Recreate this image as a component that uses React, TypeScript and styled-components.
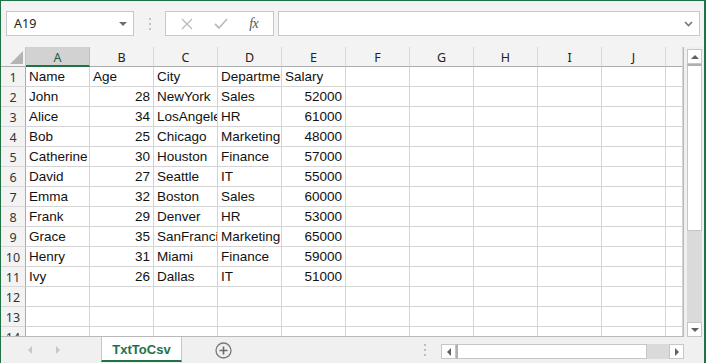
import React from 'react';
import styled, { createGlobalStyle } from 'styled-components';

const GlobalStyle = createGlobalStyle`
  html, body {
    margin: 0;
    padding: 0;
    background: #ffffff;
  }
  * {
    box-sizing: border-box;
  }
`;

const columns = ['A', 'B', 'C', 'D', 'E', 'F', 'G', 'H', 'I', 'J', ''];

type Row = [string, string | number, string, string, string | number];

const rows: Row[] = [
  ['Name', 'Age', 'City', 'Department', 'Salary'],
  ['John', 28, 'NewYork', 'Sales', 52000],
  ['Alice', 34, 'LosAngeles', 'HR', 61000],
  ['Bob', 25, 'Chicago', 'Marketing', 48000],
  ['Catherine', 30, 'Houston', 'Finance', 57000],
  ['David', 27, 'Seattle', 'IT', 55000],
  ['Emma', 32, 'Boston', 'Sales', 60000],
  ['Frank', 29, 'Denver', 'HR', 53000],
  ['Grace', 35, 'SanFrancisco', 'Marketing', 65000],
  ['Henry', 31, 'Miami', 'Finance', 59000],
  ['Ivy', 26, 'Dallas', 'IT', 51000],
];

const TOTAL_ROWS = 14;

const Frame = styled.div`
  width: 706px;
  height: 363px;
  border-style: solid;
  border-color: #217346;
  border-width: 1px 2px 0 1px;
  background: #f3f3f3;
  display: flex;
  flex-direction: column;
  overflow: hidden;
  font-family: 'Liberation Sans', Arial, sans-serif;
`;

const Toolbar = styled.div`
  height: 46px;
  flex: none;
  display: flex;
  align-items: flex-start;
  padding: 10px 4px 0 5px;
`;

const NameBox = styled.div`
  width: 128px;
  height: 25px;
  background: #ffffff;
  border: 1px solid #c8c8c8;
  display: flex;
  align-items: center;
  justify-content: space-between;
  padding: 0 6px 0 7px;
  font-family: 'Noto Sans', 'Open Sans', sans-serif;
  font-size: 12.5px;
  color: #222;
`;

const Separator = styled.div`
  width: 31px;
  height: 25px;
  display: flex;
  align-items: center;
  justify-content: center;
`;

const FxButtons = styled.div`
  width: 109px;
  height: 25px;
  background: #ffffff;
  border: 1px solid #c8c8c8;
  display: flex;
  align-items: center;
  justify-content: space-around;
  padding: 0 4px;
`;

const FxLabel = styled.span`
  font-family: 'Liberation Serif', 'Times New Roman', serif;
  font-style: italic;
  font-size: 14px;
  color: #555;
  letter-spacing: -0.5px;
`;

const FormulaInput = styled.div`
  flex: 1;
  margin-left: 4px;
  height: 25px;
  background: #ffffff;
  border: 1px solid #c8c8c8;
  display: flex;
  align-items: center;
  justify-content: flex-end;
  padding-right: 6px;
`;

const SheetArea = styled.div`
  flex: 1;
  display: flex;
  min-height: 0;
`;

const GridWrap = styled.div`
  width: 683px;
  overflow: hidden;
  background: #ffffff;
  border-right: 1px solid #b9b9b9;
  border-bottom: 1px solid #b9b9b9;
`;

const Grid = styled.div`
  display: grid;
  grid-template-columns: 25px repeat(10, 64px) 17px;
  grid-auto-rows: 20px;
`;

const Corner = styled.div`
  background: #f3f3f3;
  border-right: 1px solid #c6c6c6;
  border-bottom: 1px solid #ababab;
  display: flex;
  align-items: flex-end;
  justify-content: flex-end;
  padding: 0 2px 2px 0;
`;

const ColHeader = styled.div<{ $selected?: boolean }>`
  background: ${(p) => (p.$selected ? '#d2d2d2' : '#f3f3f3')};
  border-right: 1px solid ${(p) => (p.$selected ? '#c0c0c0' : '#d9d9d9')};
  border-bottom: ${(p) => (p.$selected ? '2px solid #217346' : '1px solid #ababab')};
  color: ${(p) => (p.$selected ? '#1e5e3b' : '#222')};
  font-family: 'Noto Sans', 'Open Sans', sans-serif;
  font-size: 12.5px;
  display: flex;
  align-items: center;
  justify-content: center;
  padding-top: 2px;
`;

const RowHeader = styled.div`
  background: #f3f3f3;
  border-right: 1px solid #ababab;
  border-bottom: 1px solid #d9d9d9;
  color: #333;
  font-family: 'Noto Sans', 'Open Sans', sans-serif;
  font-size: 12.5px;
  display: flex;
  align-items: center;
  justify-content: center;
  padding-top: 1px;
`;

const Cell = styled.div<{ $numeric?: boolean }>`
  border-right: 1px solid #d4d4d4;
  border-bottom: 1px solid #d4d4d4;
  font-size: 13.5px;
  line-height: 20px;
  color: #111;
  padding: 0 3px;
  white-space: nowrap;
  overflow: hidden;
  text-align: ${(p) => (p.$numeric ? 'right' : 'left')};
`;

const VScrollArea = styled.div`
  flex: 1;
  padding: 2px 2px 0 3px;
  display: flex;
  background: #f0f0f0;
`;

const VScroll = styled.div`
  width: 15px;
  display: flex;
  flex-direction: column;
  background: #dadada;
`;

const ScrollButton = styled.div`
  width: 15px;
  height: 15px;
  flex: none;
  background: #ffffff;
  border: 1px solid #c6c6c6;
  display: flex;
  align-items: center;
  justify-content: center;
`;

const VThumb = styled.div`
  height: 167px;
  background: #ffffff;
  border: 1px solid #c6c6c6;
  border-top: 2px solid #b0b0b0;
`;

const Spacer = styled.div`
  flex: 1;
`;

const BottomBar = styled.div`
  height: 26px;
  flex: none;
  display: flex;
  align-items: stretch;
  padding-left: 15px;
  padding-right: 20px;
  background: #f0f0f0;
`;

const NavButton = styled.div`
  width: 28px;
  display: flex;
  align-items: center;
  justify-content: center;
`;

const SheetTab = styled.div`
  margin-left: 29px;
  width: 81px;
  height: 25px;
  background: #ffffff;
  border-left: 1px solid #c6c6c6;
  border-right: 1px solid #c6c6c6;
  border-bottom: 2px solid #217346;
  display: flex;
  align-items: center;
  justify-content: center;
  font-weight: bold;
  font-size: 13px;
  color: #217346;
  padding-top: 1px;
`;

const AddSheet = styled.div`
  margin-left: 30px;
  width: 22px;
  display: flex;
  align-items: center;
  justify-content: center;
`;

const Dots = styled.div`
  width: 16px;
  display: flex;
  align-items: center;
  justify-content: center;
  margin-right: 8px;
`;

const HScroll = styled.div`
  width: 243px;
  height: 15px;
  margin-top: 7px;
  display: flex;
  background: #dadada;
`;

const HThumb = styled.div`
  width: 191px;
  height: 15px;
  background: #ffffff;
  border: 1px solid #c6c6c6;
  border-left: 2px solid #b0b0b0;
`;

const VerticalDots = ({ color = '#b5b5b5' }: { color?: string }) => (
  <svg width="4" height="12" viewBox="0 0 4 12">
    <rect x="1" y="0" width="2" height="2" fill={color} />
    <rect x="1" y="5" width="2" height="2" fill={color} />
    <rect x="1" y="10" width="2" height="2" fill={color} />
  </svg>
);

const Triangle = ({ dir, color = '#606060', size = 4 }: { dir: 'up' | 'down' | 'left' | 'right'; color?: string; size?: number }) => {
  const s = size;
  const points = {
    up: `0,${s} ${s * 2},${s} ${s},0`,
    down: `0,0 ${s * 2},0 ${s},${s}`,
    left: `${s},0 ${s},${s * 2} 0,${s}`,
    right: `0,0 0,${s * 2} ${s},${s}`,
  }[dir];
  const w = dir === 'up' || dir === 'down' ? s * 2 : s;
  const h = dir === 'up' || dir === 'down' ? s : s * 2;
  return (
    <svg width={w} height={h} viewBox={`0 0 ${w} ${h}`}>
      <polygon points={points} fill={color} />
    </svg>
  );
};

export default function App() {
  return (
    <>
      <GlobalStyle />
      <Frame>
        <Toolbar>
          <NameBox>
            <span>A19</span>
            <Triangle dir="down" color="#6e6e6e" size={4} />
          </NameBox>
          <Separator>
            <VerticalDots color="#c2c2c2" />
          </Separator>
          <FxButtons>
            <svg width="12" height="12" viewBox="0 0 12 12">
              <path d="M1 1 L11 11 M11 1 L1 11" stroke="#bdbdbd" strokeWidth="1.4" fill="none" />
            </svg>
            <svg width="14" height="12" viewBox="0 0 14 12">
              <path d="M1 6 L5 10 L13 1" stroke="#bdbdbd" strokeWidth="1.8" fill="none" />
            </svg>
            <FxLabel>fx</FxLabel>
          </FxButtons>
          <FormulaInput>
            <svg width="9" height="6" viewBox="0 0 9 6">
              <path d="M1 1 L4.5 4.5 L8 1" stroke="#777" strokeWidth="1.6" fill="none" />
            </svg>
          </FormulaInput>
        </Toolbar>

        <SheetArea>
          <GridWrap>
            <Grid>
              <Corner>
                <svg width="13" height="13" viewBox="0 0 13 13">
                  <polygon points="13,0 13,13 0,13" fill="#b4b4b4" />
                </svg>
              </Corner>
              {columns.map((c, i) => (
                <ColHeader key={`h${i}`} $selected={c === 'A'}>
                  {c}
                </ColHeader>
              ))}
              {Array.from({ length: TOTAL_ROWS }, (_, r) => {
                const data = rows[r];
                return (
                  <React.Fragment key={r}>
                    <RowHeader>{r + 1}</RowHeader>
                    {columns.map((_, ci) => {
                      const v = data ? data[ci] : undefined;
                      return (
                        <Cell key={ci} $numeric={typeof v === 'number'}>
                          {v ?? ''}
                        </Cell>
                      );
                    })}
                  </React.Fragment>
                );
              })}
            </Grid>
          </GridWrap>
          <VScrollArea>
            <VScroll>
              <ScrollButton>
                <Triangle dir="up" color="#606060" size={4} />
              </ScrollButton>
              <VThumb />
              <Spacer />
              <ScrollButton>
                <Triangle dir="down" color="#606060" size={4} />
              </ScrollButton>
            </VScroll>
          </VScrollArea>
        </SheetArea>

        <BottomBar>
          <NavButton>
            <Triangle dir="left" color="#c8c8c8" size={4} />
          </NavButton>
          <NavButton>
            <Triangle dir="right" color="#c8c8c8" size={4} />
          </NavButton>
          <SheetTab>TxtToCsv</SheetTab>
          <AddSheet>
            <svg width="17" height="17" viewBox="0 0 17 17">
              <circle cx="8.5" cy="8.5" r="7.5" stroke="#7a7a7a" strokeWidth="1.3" fill="none" />
              <path d="M8.5 4.5 V12.5 M4.5 8.5 H12.5" stroke="#6a6a6a" strokeWidth="1.6" />
            </svg>
          </AddSheet>
          <Spacer />
          <Dots>
            <VerticalDots color="#bdbdbd" />
          </Dots>
          <HScroll>
            <ScrollButton>
              <Triangle dir="left" color="#606060" size={4} />
            </ScrollButton>
            <HThumb />
            <Spacer />
            <ScrollButton>
              <Triangle dir="right" color="#606060" size={4} />
            </ScrollButton>
          </HScroll>
        </BottomBar>
      </Frame>
    </>
  );
}
